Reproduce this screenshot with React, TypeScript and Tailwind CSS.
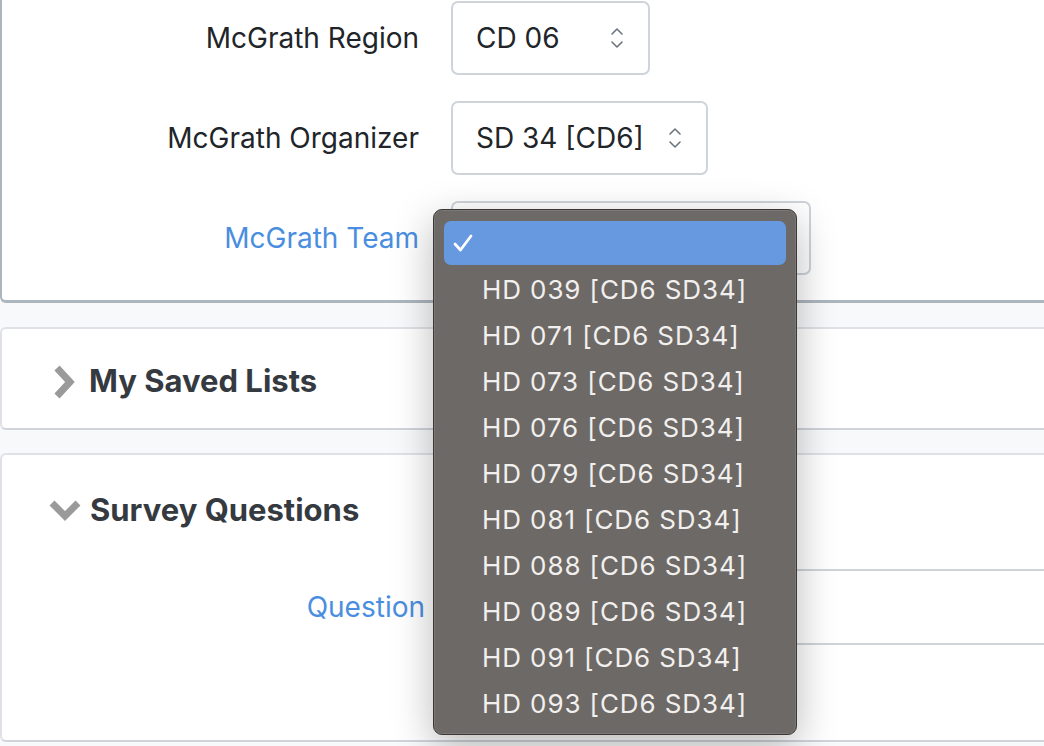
import React from 'react';

const font = { fontFamily: 'Inter, "Noto Sans", "Liberation Sans", sans-serif' };

const teamOptions = [
  'HD 039 [CD6 SD34]',
  'HD 071 [CD6 SD34]',
  'HD 073 [CD6 SD34]',
  'HD 076 [CD6 SD34]',
  'HD 079 [CD6 SD34]',
  'HD 081 [CD6 SD34]',
  'HD 088 [CD6 SD34]',
  'HD 089 [CD6 SD34]',
  'HD 091 [CD6 SD34]',
  'HD 093 [CD6 SD34]'
];

const UpDown = () => (
  <svg width="14" height="22" viewBox="0 0 14 22" fill="none" stroke="#6c757d" strokeWidth="1.6" strokeLinecap="round" strokeLinejoin="round">
    <polyline points="2,7 7,2 12,7" />
    <polyline points="2,15 7,20 12,15" />
  </svg>
);

const SelectBox: React.FC<{ value: string; width: string }> = ({ value, width }) => (
  <div className={`${width} h-[74px] flex items-center justify-between pl-[23px] pr-[24px] bg-white border-2 border-[#ced4da] rounded-[7px]`}>
    <span className="text-[28px] text-[#212529]">{value}</span>
    <UpDown />
  </div>
);

const TeamDropdown = () => (
  <div className="absolute left-[-18px] top-[8px] z-20 w-[364px] h-[526px] bg-[#6d6966] border border-[#3b3836] rounded-[9px] shadow-[0_12px_40px_rgba(0,0,0,0.28)] ring-1 ring-inset ring-white/10 pt-[10px] px-[10px]">
    <div className="h-[46px] flex items-center">
      <div className="w-full h-[44px] bg-[#6799e1] rounded-[7px] flex items-center pl-[9px]">
        <svg width="20" height="20" viewBox="0 0 20 20" fill="none" stroke="#ffffff" strokeWidth="2.8" strokeLinecap="round" strokeLinejoin="round">
          <polyline points="2,11 7.5,17 18,3" />
        </svg>
      </div>
    </div>
    {teamOptions.map((opt) => (
      <div key={opt} className="h-[46px] flex items-center pl-[38px] text-[26px] tracking-[0.9px] text-[#f2f0ee]">
        {opt}
      </div>
    ))}
  </div>
);

const FieldRow: React.FC<{ label: string; active?: boolean; children: React.ReactNode }> = ({ label, active, children }) => (
  <div className="flex items-center gap-[32px]">
    <div className={`w-[417px] text-right text-[28px] ${active ? 'text-[#4a8ee0]' : 'text-[#212529]'}`}>{label}</div>
    {children}
  </div>
);

const App: React.FC = () => {
  return (
    <div style={font} className="w-[1044px] h-[746px] overflow-hidden bg-[#f8f9fa] relative">
      {/* Area filters card */}
      <div className="bg-white border-l-2 border-b-[3px] border-[#adb5bd] rounded-bl-[6px] pt-[1px] pb-[25px] flex flex-col gap-[26px]">
        <FieldRow label="McGrath Region">
          <SelectBox value="CD 06" width="w-[199px]" />
        </FieldRow>
        <FieldRow label="McGrath Organizer">
          <SelectBox value="SD 34 [CD6]" width="w-[257px]" />
        </FieldRow>
        <FieldRow label="McGrath Team" active>
          <div className="relative">
            <div className="w-[360px] h-[74px] bg-white border-2 border-[#ced4da] rounded-[7px]" />
            <TeamDropdown />
          </div>
        </FieldRow>
      </div>

      {/* My Saved Lists */}
      <div className="mt-[24px] h-[103px] bg-white border-2 border-[#dee2e6] border-b-[#ced4da] border-r-0 rounded-l-[6px] flex items-center gap-[14px] pl-[51px] pt-[6px]">
        <svg width="22" height="34" viewBox="0 0 22 34" fill="none" stroke="#9a9a9a" strokeWidth="7" strokeLinejoin="miter">
          <polyline points="4,3 17,17 4,31" />
        </svg>
        <span className="text-[31px] font-bold text-[#343a40]">My Saved Lists</span>
      </div>

      {/* Survey Questions */}
      <div className="mt-[23px] h-[289px] bg-white border-2 border-[#dee2e6] border-b-[#ced4da] border-r-0 rounded-l-[6px]">
        <div className="flex items-center gap-[9px] pl-[47px] pt-[32px]">
          <svg width="32" height="22" viewBox="0 0 32 22" fill="none" stroke="#9a9a9a" strokeWidth="7" strokeLinejoin="miter">
            <polyline points="3,4 16,17 29,4" />
          </svg>
          <span className="text-[31px] font-bold text-[#343a40]">Survey Questions</span>
        </div>
        <div className="flex items-center gap-[32px] mt-[35px]">
          <div className="w-[423px] text-right text-[28px] text-[#4a8ee0]">Question</div>
          <div className="flex-1 h-[76px] bg-white border-2 border-r-0 border-[#ced4da] rounded-l-[7px]" />
        </div>
      </div>
    </div>
  );
};

export default App;
